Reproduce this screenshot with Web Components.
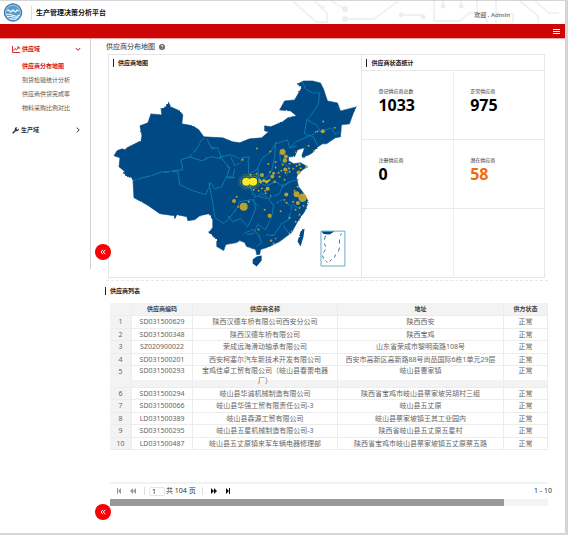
<!DOCTYPE html>
<html lang="zh-CN">
<head>
<meta charset="utf-8">
<title>生产管理决策分析平台</title>
<style>
html{background:#d4d5d6}
body{margin:0;font:6px/8px "Noto Sans","Noto Sans CJK SC",sans-serif;color:#333}
</style>
</head>
<body>
<app-shell>
  <app-header slot="header"></app-header>
  <side-menu slot="menu"></side-menu>
  <page-title>供应商分布地图</page-title>
  <overview-panels>
    <panel-box slot="map" heading="供应商地图"><supplier-map></supplier-map></panel-box>
    <panel-box slot="stats" heading="供应商状态统计"><stat-grid></stat-grid></panel-box>
  </overview-panels>
  <supplier-list></supplier-list>
</app-shell>
<script>
function define(name, html, setup) {
  customElements.define(name, class extends HTMLElement {
    constructor() {
      super();
      this.attachShadow({mode: 'open'}).innerHTML = '<style>*{box-sizing:border-box}:host{display:block}</style>' + html;
    }
    connectedCallback() { if (setup) setup(this, this.shadowRoot); }
  });
}

define('app-shell', `<style>
:host{background:#fff;margin:1px 3px 2px 0}
.body{display:grid;grid-template-columns:91px minmax(0,1fr);align-items:start}
.side{border-right:1px solid #d2d2d2;min-height:230px}
main{padding:0 17px 27px 17px}
</style>
<slot name="header"></slot>
<div class="body"><nav class="side"><slot name="menu"></slot></nav><main><slot></slot></main></div>`);

define('app-header', `<style>
.top{display:flex;align-items:center;height:23px;position:relative;padding-left:3px}
.logo{width:20px;height:20px;flex:none}
b{font-size:7px;line-height:14px;color:#111;border-left:1px solid #ddd;margin-left:8px;padding-left:4px}
.deco{position:absolute;right:5px;top:0;width:270px;height:23px}
.user{position:relative;margin-left:auto;margin-right:55px;padding-top:5px;font-weight:600;color:#777}
.bar{background:#cc0605;height:15px;border-bottom:1px solid #efa5a5;display:flex;justify-content:flex-end;align-items:center;padding-right:5px}
button{border:0;background:none;padding:0;width:7px;height:7px;display:block}
button svg{display:block}
</style>
<div class="top">
<svg class="logo" viewBox="0 0 20 20"><circle cx="10" cy="9.500" r="8.700" fill="#3d86bd" stroke="#2e78b2"/><circle cx="10" cy="9.500" r="7.400" fill="#5a9bca" stroke="#d4e7f3" stroke-width=".7"/><path d="M4.500 8q1-1.800 2.200 0t2.200 0 2.200 0 2.200 0 2.200 0" fill="none" stroke="#fff" stroke-width="1.300"/><path d="M3.200 11.400q3.400-1 6.800 1t6.800-.4M4 14q3-1.600 6 0t5.600-.2M6.500 16q2-.8 3.500 0t3.500 0" fill="none" stroke="#fff" stroke-width="1"/></svg>
<b>生产管理决策分析平台</b>
<svg class="deco" viewBox="290 1 270 23" fill="none" stroke="#f1f1f1" stroke-width="1.800"><path d="M293 1l23 21h11V13l-8-9M315 1l7 8 3-3M331 1l14 8M345 19h29l24-18M401 15h22M434 1v20h26l9-8h14M443 1v4M461 1v4M477 1v10l10 9v3M496 1v22M505 14h8v9M520 1l18 15v7M535 1l14 12h10"/><g fill="#ededed" stroke="none"><circle cx="345" cy="9" r="3"/><circle cx="345" cy="19" r="3"/><circle cx="401" cy="15" r="2.500"/><circle cx="423" cy="17" r="2.500"/><circle cx="443" cy="6" r="2.500"/><circle cx="461" cy="6" r="2.500"/></g></svg>
<span class="user">欢迎 , Admin</span></div>
<div class="bar"><button aria-label="菜单"><svg width="7" height="7" viewBox="0 0 7 7"><path d="M0 1.500h7M0 3.500h7M0 5.500h7" stroke="#fff"/></svg></button></div>`);

define('side-menu', `<style>
:host{padding:4px 9px 0 12px}
button{all:unset;display:flex;align-items:center;width:100%;height:12px;font-weight:700;box-sizing:border-box}
button span{flex:1;padding-left:2px}
svg{display:block}
.on{color:#d4141c}
ul{list-style:none;margin:4px 0 9px;padding:0 0 0 10px}
li{height:14px;line-height:14px;white-space:nowrap}
a{color:#555;text-decoration:none}
a.on{color:#d4141c;font-weight:700}
</style>
<button class="on"><svg width="8" height="7" viewBox="0 0 8 7" fill="none" stroke="currentColor"><path d="M.5 0v6.500H8M1.500 4.500l1.500-2 1.500 1.300L7 1M5 1h2v2" stroke-width=".9"/></svg><span>供应域</span><svg width="6" height="6" viewBox="0 0 6 6" fill="none" stroke="currentColor"><path d="M.8 2L3 4.300 5.200 2"/></svg></button>
<ul><li><a class="on" href="#map">供应商分布地图</a></li><li><a href="#check">到货检验统计分析</a></li><li><a href="#rate">供应商供货完成率</a></li><li><a href="#ratio">物料采购比例对比</a></li></ul>
<button><svg width="7" height="7" viewBox="0 0 7 7"><path d="M.7 6.300L4 3" stroke="#333" stroke-width="1.500"/><path d="M6.700 1.500L5.300 2.700 4.300 1.800 5.300.4Q3.300-.1 2.800 1.500T4 4Q5.400 4.600 6.300 3.500T6.700 1.500z" fill="#333"/></svg><span>生产域</span><svg width="6" height="6" viewBox="0 0 6 6" fill="none" stroke="currentColor"><path d="M1.800.6L4.200 3 1.800 5.400"/></svg></button>`);

define('page-title', `<style>
:host{display:flex;align-items:center;gap:4px;height:15px}
h1{font-size:7px;line-height:15px;font-weight:400;margin:0 0 0 -2px;color:#333}
</style><h1><slot></slot></h1><svg width="6" height="6" viewBox="0 0 6 6"><circle cx="3" cy="3" r="3" fill="#666"/><path d="M2 2.300Q2 1.300 3 1.300T4 2.200 3 3.400M3 4.200v.8" fill="none" stroke="#fff" stroke-width=".8"/></svg>`);

define('overview-panels', `<style>
:host{display:grid;grid-template-columns:254fr 182fr;margin-right:3px;border:1px solid #e6e6e6}
.map{border-right:1px solid #e6e6e6;min-width:0}
</style><div class="map"><slot name="map"></slot></div><slot name="stats"></slot>`);

define('panel-box', `<style>
:host{display:flex;flex-direction:column}
h2{font-size:6px;line-height:8px;margin:4px 0 3px 4px;padding-left:4px;border-left:1px solid #222;color:#222}
.fill{flex:1;display:grid}
</style><h2></h2><div class="fill"><slot></slot></div>`, (el, root) => { root.querySelector('h2').textContent = el.getAttribute('heading'); });

define('collapse-button', `<style>
button{border:0;padding:0;width:16px;height:16px;border-radius:50%;background:#fa0006;display:grid;place-items:center}
</style><button aria-label="收起"><svg width="6" height="6" viewBox="0 0 6 6" fill="none" stroke="#fff" stroke-width="1"><path d="M3 .8L1 3l2 2.200M5.300.8l-2 2.200 2 2.200"/></svg></button>`);

const mainland = '114,156 117,151 122,149 125,150 127,148 135,144 141,141 142,136 140,126 148,123 151,114 162,115 161,108 166,107 167,104 169,103 171,107 180,111 183,115 182,124 193,126 199,130 204,137 223,138 233,142 240,143 250,139 262,138 269,132 265,131 265,126 271,127 283,122 288,118 297,116 291,111 280,110 285,101 295,100 302,88 298,84 304,81 313,81 321,83 324,89 328,101 338,103 341,111 357,107 354,113 350,124 342,125 341,137 336,138 327,144 323,144 317,148 313,153 304,158 302,157 305,148 298,150 295,157 289,157 289,161 294,164 301,163 308,167 303,170 298,175 297,178 299,187 303,192 309,202 305,212 298,222 292,233 280,242 270,247 261,250 260,255 257,255 256,250 247,247 245,243 240,241 237,243 226,245 224,251 217,247 217,240 209,233 213,228 213,220 209,214 200,216 195,220 188,221 187,217 177,215 175,219 174,216 160,214 147,205 134,198 133,180 123,173 125,172 119,167 120,158';
const dots = [
 [257.300,148.700,1],[270.700,151.700,1],[243,160,1],[283,152.300,3],[286.300,156.600,2],[285.300,160.700,2.200],[309,146,1],[314.700,151,1],[304,157.700,.8],[296,152.500,.8],
 [323.700,121.700,1],[335.300,128,1],[323.300,131.500,2],[318,131.700,1],[316,132.200,.8],[276,162.300,1],[268.700,164.300,1],[276,167.700,1],[283,165,1],[290,164,1],
 [281.700,171,1],[285.700,169.700,2],[289.600,168.700,1],[293.700,169,1],[297,166.300,1],[300,164.700,1.200],[301,168.500,1],[307,167,1.500],[299,172.700,2],[270.300,172.300,1],[274,173.500,1.500],
 [262.300,175.300,2],[257,174,1],[251,175,1],[272.700,176.700,2],[270,180,1],[279,173,1],[286,173,1],[290,172,1],[265,181,1],[260,180,1],[275,182,1.200],[280,177,1],[285,180,1],
 [268,189,2],[262.300,188.700,1],[265.500,191,1],[266,193.500,1],[271,196,.8],[254,190,1],[259,191,1],[286.700,194.700,2],[285,200,.8],[287,203,1],[298,187,1],[295,191,1],[297,194.500,3],[303,198,4.200],[298.300,203.300,2],[293.600,202,1],[300,208,1],[296,210,1],[304,206,1],[300,215,1],
 [234.300,201.300,2],[237,197,1],[238.500,207,1],[244,207,4],[265,210,1],[270,216,2],[281,211.500,1],[290,218,1],[296,222,1],[292,232,.8],[290,234,1],[259,230,1],[271.500,241,1.200],[274,244,1],[276,239,.8],[249,202,1],[250,180,1]
];
define('supplier-map', `<style>
:host{min-width:0}svg{display:block;width:100%;height:auto}
</style><svg viewBox="109 70 253 207" role="img" aria-label="供应商地图">
<defs><filter id="coast" x="-5%" y="-5%" width="110%" height="110%"><feTurbulence type="fractalNoise" baseFrequency=".2" numOctaves="2" seed="7"/><feDisplacementMap in="SourceGraphic" scale="2" xChannelSelector="R" yChannelSelector="G"/></filter></defs>
<g filter="url(#coast)">
<polygon fill="#004a84" stroke="#004a84" stroke-width=".6" points="${mainland}"/>
<path fill="#004a84" d="M253 260l4-3 5-1v5l-5 6-4-3zM301 232l4-3-1 8-3 10-3-5z"/>
<path fill="none" stroke="#0d80b2" stroke-width=".9" d="M204 138l-6 9-8 10-9 3 2 10-10 1-9 2M189 157l13 4 9-4 11 2 8 9-3 9 8 1M207 139l5 10 6-1 3 9 11-2 8 4M133 181l10-3 8-2 11-4 16 0 2 13 13 6 13 4 5-12 4 6 7-2 4-9 7 0 2-9M209 183l4 19 2 16 9 6 7-7 5-7 4-8 12-2 7 7M231 157l4 9 6-3 1-5 7-1 0 17 8-4 6-12 8-6 5-8 12-4 2 8 7-2M276 142l-1 15-3 14-6 8-7-4-9 11 4 9 13 4M291 147l5-5 14-6 5-2M303 82l3 7 7 4 7 0-1 11-8 12-4 5-2 13 9 3 4 9M307 120l10 5 4 7 11-4 4 7 4-3M258 168l2 15 7 3 9-4 8 5 6-5 9-2M254 198l8-4 7 5 11-5 3-8 8-4M269 199l5 7-2 11-6 13-8-5-4 9-7 1M254 199l2 10-4 10-4 8-7-8-8 3-5-6M244 234l9-4 6 5 3 8-5 4M275 204l8-4 9 7-3 13-7 4-8 12-8-1M292 204l7 5M282 224l7 9M284 148l-4 5 1 9 8 5-2 9"/>
</g>
<g fill="#c3a92c" fill-opacity=".93" id="dots"></g>
<g fill="none" stroke="#bdb52c" stroke-width=".5"><circle cx="246.500" cy="182" r="5.700"/><circle cx="246.500" cy="182" r="7.500" opacity=".5"/><circle cx="253.500" cy="182" r="5.700"/><circle cx="253.500" cy="182" r="7.500" opacity=".5"/></g>
<g fill="#f7ed24"><circle cx="246.500" cy="182" r="4"/><circle cx="253.500" cy="182" r="4"/></g>
<g fill="#c2b62b"><circle cx="261" cy="182" r="1.500"/><circle cx="264" cy="181" r="1.500"/><circle cx="267" cy="182" r="1.800"/><circle cx="269" cy="181" r="1"/></g>
<path d="M321.500 231.500h24v35h-24z" fill="#fff" stroke="#68a9c9"/><path d="M322 232h13l-5 3-6-.5z" fill="#004a84"/><path d="M326 236l-1 4M325 244l1 3M326 250l-2 3M323 256l1 3M326 261l2 2M330 262l2-2M335 258l1-3M339 252l1-4M340 244v-4M341 236l1-2" stroke="#2a7fa8" fill="none"/>
</svg>`, (el, root) => { root.getElementById('dots').innerHTML = dots.map(([x, y, r]) => `<circle cx="${x}" cy="${y}" r="${r}"/>`).join(''); });

define('stat-grid', `<style>
:host{display:grid;grid-template-columns:1fr 1fr;grid-template-rows:repeat(3,1fr)}
div{border-top:1px solid #e9e9e9;padding:16px 0 0 16px}
div:nth-of-type(even){border-left:1px solid #eee}
span{display:block;font-size:5px;line-height:8px;color:#333}
strong{display:block;font-size:16px;line-height:21px;color:#000}
.hot{color:#f26a0e}
</style>
<div><span>登记供应商总数</span><strong>1033</strong></div><div><span>正常供应商</span><strong>975</strong></div>
<div><span>注册供应商</span><strong>0</strong></div><div><span>潜在供应商</span><strong class="hot">58</strong></div><div></div><div></div>`);

const rows = [
 ['SD031500629','陕西汉德车桥有限公司西安分公司','陕西西安'],
 ['SD031500348','陕西汉德车桥有限公司','陕西宝鸡'],
 ['SZ020900022','荣成远海滑动轴承有限公司','山东省荣成市黎明南路108号'],
 ['SD031500201','西安柯塞尔汽车新技术开发有限公司','西安市高新区高新路88号尚品国际6栋1单元29层'],
 ['SD031500293','宝鸡佳卓工贸有限公司（岐山县春蕾电器厂）','岐山县曹家镇'],
 ['SD031500294','岐山县华诚机械制造有限公司','陕西省宝鸡市岐山县蔡家坡另胡村三组'],
 ['SD031500066','岐山县华强工贸有限责任公司-3','岐山县五丈原'],
 ['LD031500389','岐山县森源工贸有限公司','岐山县蔡家坡镇王其工业园内'],
 ['SD031500295','岐山县五星机械制造有限公司-3','陕西省岐山县五丈原五星村'],
 ['LD031500487','岐山县五丈原镇来军车辆电器修理部','陕西省宝鸡市岐山县蔡家坡镇五丈原蔡五路']
];
define('supplier-list', `<style>
:host{margin:2px 0 0 -2px;border-top:1px dashed #e8e8e8;position:relative}
h2{font-size:6px;line-height:8px;margin:6px 0 8px -1px;padding-left:4px;border-left:1px solid #222;color:#222}
.wrap{margin-left:4px}
table{width:100%;table-layout:fixed;border-collapse:separate;border-spacing:0;font-size:7px;line-height:11px;color:#666}
th,td{height:12px;padding:0;text-align:center;border-right:1px solid #ececec;border-bottom:1px solid #ececec;vertical-align:top;font-weight:400}
tr:nth-child(odd)>*{height:13px}
thead th{background:#f3f3f3;font-size:6px;line-height:12px;font-weight:600;color:#444}
tbody th{background:#f3f3f3}
td:nth-child(3){padding:0 8px}
tr.double>*{height:22px}
.double td{line-height:10px;background:linear-gradient(to top,#f3f3f3 7px,#fff 7px)}
.pager{display:flex;align-items:center;height:17px;margin-top:32px;border-top:2px solid #f2f2f2;white-space:nowrap;font-size:7px;padding-left:6px;gap:8px}
button{border:0;background:none;padding:0;width:6px;height:6px;color:#111;flex:none}
button:disabled{color:#999}
svg{display:block}
i{width:1px;height:8px;background:#ddd;flex:none}
label{display:flex;align-items:center;gap:1px;margin-left:-4px}
input{width:16px;height:9px;border:1px solid #e5e5e5;border-radius:2px;padding:0 0 0 2px;font:inherit;color:#222;outline:0}
label+i{margin-left:-2px}
.range{margin-left:auto;margin-right:-4px;flex:none}
.track{height:7px;background:#f3f3f3}.thumb{height:7px;width:90%;background:#999}
collapse-button{position:absolute;left:-11px}
.upper{top:-37px}.lower{bottom:-14px}
</style>
<h2>供应商列表</h2>
<div class="wrap"><table><colgroup><col style="width:5%"><col style="width:14%"><col style="width:33%"><col><col style="width:10%"></colgroup>
<thead><tr><th></th><th>供应商编码</th><th>供应商名称</th><th>地址</th><th>供方状态</th></tr></thead><tbody></tbody></table>
<div class="pager"><button disabled aria-label="首页"><svg width="6" height="6" viewBox="0 0 6 6"><path d="M1 0h1v6H1zM5 0v6L2 3z" fill="currentColor"/></svg></button><button disabled aria-label="上一页"><svg width="6" height="6" viewBox="0 0 6 6"><path d="M3 0v6L0 3zM6 0v6L3 3z" fill="currentColor"/></svg></button><i></i>
<label><input value="1" aria-label="页码"><span>共 104 页</span></label><i></i><button aria-label="下一页"><svg width="6" height="6" viewBox="0 0 6 6"><path d="M0 0v6l3-3zM3 0v6l3-3z" fill="currentColor"/></svg></button><button aria-label="末页"><svg width="6" height="6" viewBox="0 0 6 6"><path d="M4 0h1v6H4zM1 0v6l3-3z" fill="currentColor"/></svg></button><span class="range">1 - 10</span></div>
<div class="track"><div class="thumb"></div></div></div>
<collapse-button class="upper"></collapse-button><collapse-button class="lower"></collapse-button>`, (el, root) => {
  root.querySelector('tbody').innerHTML = rows.map((r, i) => `<tr${i === 4 ? ' class="double"' : ''}><th scope="row">${i + 1}</th>${r.map(t => `<td>${t}</td>`).join('')}<td>正常</td></tr>`).join('');
});
</script>
</body>
</html>
